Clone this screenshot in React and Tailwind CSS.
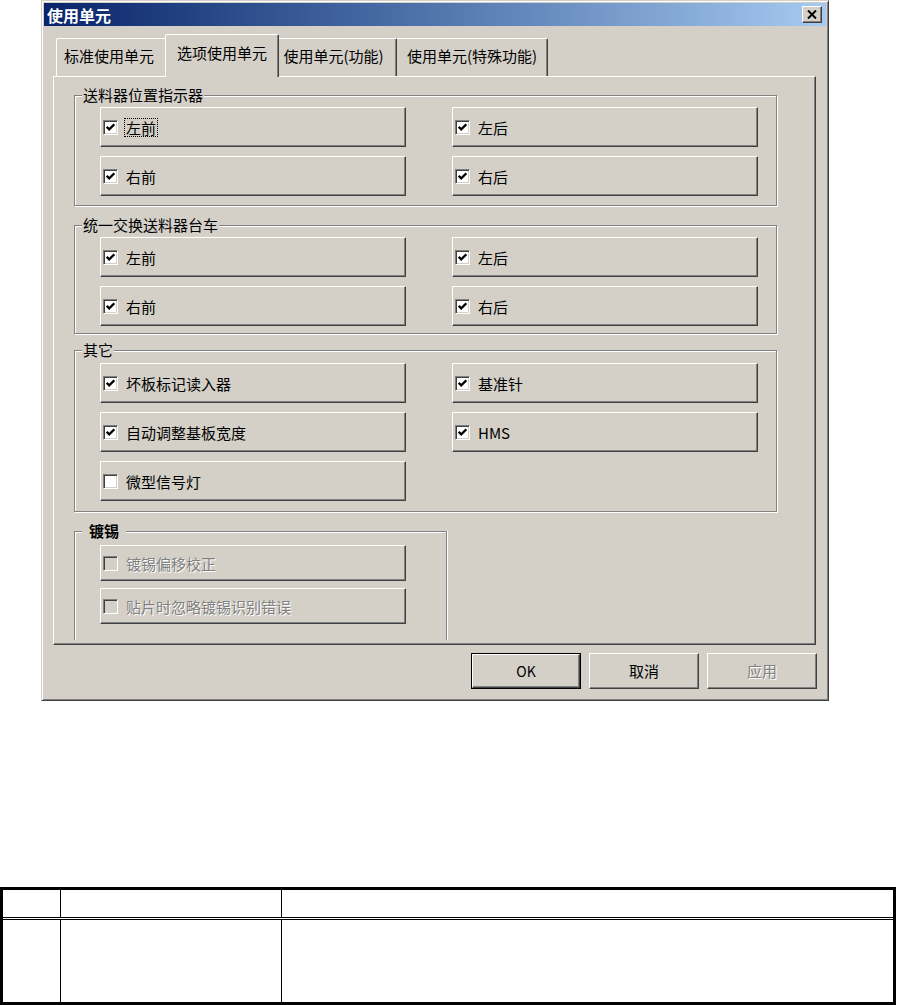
import React from "react";

function Check({ checked, disabled }) {
  return (
    <span
      className={
        disabled
          ? "w-[15px] h-[15px] shrink-0 border border-[#808080] border-r-white border-b-white shadow-[inset_1px_1px_0_#404040,inset_-1px_-1px_0_#d4d0c8] bg-[#d4d0c8] flex items-center justify-center"
          : "w-[15px] h-[15px] shrink-0 border border-[#808080] border-r-white border-b-white shadow-[inset_1px_1px_0_#404040,inset_-1px_-1px_0_#d4d0c8] bg-white flex items-center justify-center"
      }
    >
      {checked && (
        <svg width="9" height="9" viewBox="0 0 7 7">
          <polyline points="0.5,3 2.5,5 6.5,1" fill="none" stroke="#000" strokeWidth="1.8" />
        </svg>
      )}
    </span>
  );
}

function CBtn({ label, checked, disabled, focus, h40 = true }) {
  return (
    <div
      className={
        (h40 ? "h-[40px] " : "h-[36px] ") +
        "w-[306px] border border-white border-r-[#404040] border-b-[#404040] shadow-[inset_-1px_-1px_0_#808080] flex items-center pl-[2px] gap-[6px]"
      }
    >
      <Check checked={checked} disabled={disabled} />
      {focus ? (
        <span className="border border-dotted border-black px-[1px] leading-[17px]">{label}</span>
      ) : disabled ? (
        <span className="text-[#808080] [text-shadow:1px_1px_0_#fff] leading-[17px] pl-[2px]">{label}</span>
      ) : (
        <span className="leading-[17px] pl-[2px]">{label}</span>
      )}
    </div>
  );
}

function Group({ title, children, cls }) {
  return (
    <div className={"relative border border-[#808080] shadow-[inset_1px_1px_0_#fff,1px_1px_0_#fff] " + cls}>
      <span className="absolute left-[7px] top-[-10px] bg-[#d4d0c8] px-[1px] leading-[18px]">{title}</span>
      {children}
    </div>
  );
}

export default function App() {
  return (
    <div className="w-[899px] min-h-[1005px] bg-white font-['Noto_Sans_CJK_SC','Liberation_Sans',sans-serif] text-[15px] text-black">
      {/* Dialog */}
      <div className="ml-[41px] w-[788px] h-[701px] bg-[#d4d0c8] border border-[#d4d0c8] border-r-[#404040] border-b-[#404040] shadow-[inset_1px_1px_0_#fff,inset_-1px_-1px_0_#808080] p-[2px] flex flex-col">
        {/* Title bar */}
        <div className="h-[23px] shrink-0 bg-gradient-to-r from-[#0a246a] to-[#a6caf0] flex items-center justify-between">
          <span className="pl-[3px] text-white font-bold text-[16px] leading-none">使用单元</span>
          <div className="mr-[4px] w-[20px] h-[17px] bg-[#d4d0c8] border border-white border-r-[#404040] border-b-[#404040] shadow-[inset_-1px_-1px_0_#808080] flex items-center justify-center">
            <svg width="10" height="9" viewBox="0 0 10 9">
              <path d="M1 0.5 L9 8.5 M9 0.5 L1 8.5" stroke="#000" strokeWidth="2" />
            </svg>
          </div>
        </div>

        {/* Tabs */}
        <div className="h-[50px] shrink-0 flex items-end pl-[12px]">
          <div className="w-[109px] h-[38px] border-t border-l border-white rounded-tl-[2px] flex items-center justify-center pr-[4px] pb-[2px]">
            标准使用单元
          </div>
          <div className="relative z-10 -mb-px w-[114px] h-[43px] bg-[#d4d0c8] border-t border-l border-white border-r border-r-[#404040] shadow-[inset_-1px_0_0_#808080] rounded-t-[2px] flex items-center justify-center pb-[6px]">
            选项使用单元
          </div>
          <div className="w-[118px] h-[38px] border-t border-white border-r border-r-[#404040] shadow-[inset_-1px_0_0_#808080] rounded-tr-[2px] flex items-center justify-center pr-[8px] pb-[2px]">
            使用单元(功能)
          </div>
          <div className="w-[151px] h-[38px] border-t border-white border-r border-r-[#404040] shadow-[inset_-1px_0_0_#808080] rounded-tr-[2px] flex items-center justify-center pb-[2px]">
            使用单元(特殊功能)
          </div>
        </div>

        {/* Panel */}
        <div className="ml-[9px] w-[763px] h-[569px] shrink-0 border border-white border-r-[#404040] border-b-[#404040] shadow-[inset_-1px_-1px_0_#808080] pl-[20px] pr-[38px] pt-[18px] pb-[4px] flex flex-col">
          <Group title="送料器位置指示器" cls="pt-[11px] pb-[9px] pl-[25px] pr-[19px]">
            <div className="grid grid-cols-[306px_306px] gap-x-[46px] gap-y-[9px]">
              <CBtn label="左前" checked focus />
              <CBtn label="左后" checked />
              <CBtn label="右前" checked />
              <CBtn label="右后" checked />
            </div>
          </Group>

          <Group title="统一交换送料器台车" cls="mt-[19px] pt-[11px] pb-[7px] pl-[25px] pr-[19px]">
            <div className="grid grid-cols-[306px_306px] gap-x-[46px] gap-y-[9px]">
              <CBtn label="左前" checked />
              <CBtn label="左后" checked />
              <CBtn label="右前" checked />
              <CBtn label="右后" checked />
            </div>
          </Group>

          <Group title="其它" cls="mt-[16px] pt-[12px] pb-[10px] pl-[25px] pr-[19px]">
            <div className="grid grid-cols-[306px_306px] gap-x-[46px] gap-y-[9px]">
              <CBtn label="坏板标记读入器" checked />
              <CBtn label="基准针" checked />
              <CBtn label="自动调整基板宽度" checked />
              <CBtn label="HMS" checked />
              <CBtn label="微型信号灯" />
            </div>
          </Group>

          <div className="relative mt-[19px] w-[373px] flex-1 border border-b-0 border-[#808080] shadow-[inset_1px_1px_0_#fff,1px_0_0_#fff] pt-[13px] pl-[25px] flex flex-col gap-[7px]">
            <span className="absolute left-[7px] top-[-10px] bg-[#d4d0c8] px-[7px] leading-[18px] font-semibold">镀锡</span>
            <CBtn label="镀锡偏移校正" disabled h40={false} />
            <CBtn label="贴片时忽略镀锡识别错误" disabled h40={false} />
          </div>
        </div>

        {/* Bottom buttons */}
        <div className="mt-[8px] h-[36px] shrink-0 flex justify-end gap-[8px] pr-[9px]">
          <div className="w-[110px] h-[36px] border border-black">
            <div className="w-full h-full border border-white border-r-[#404040] border-b-[#404040] shadow-[inset_-1px_-1px_0_#808080] flex items-center justify-center text-[14px]">
              OK
            </div>
          </div>
          <div className="w-[110px] h-[36px] border border-white border-r-[#404040] border-b-[#404040] shadow-[inset_-1px_-1px_0_#808080] flex items-center justify-center">
            取消
          </div>
          <div className="w-[110px] h-[36px] border border-white border-r-[#404040] border-b-[#404040] shadow-[inset_-1px_-1px_0_#808080] flex items-center justify-center text-[#808080] [text-shadow:1px_1px_0_#fff]">
            应用
          </div>
        </div>
      </div>

      {/* Table */}
      <div className="mt-[186px] w-[896px] border-[3px] border-black">
        <div className="flex h-[30px] border-b-[3px] border-double border-black">
          <div className="w-[58px] border-r border-black"></div>
          <div className="w-[221px] border-r border-black"></div>
          <div className="flex-1"></div>
        </div>
        <div className="flex h-[82px]">
          <div className="w-[58px] border-r border-black"></div>
          <div className="w-[221px] border-r border-black"></div>
          <div className="flex-1"></div>
        </div>
      </div>
    </div>
  );
}
